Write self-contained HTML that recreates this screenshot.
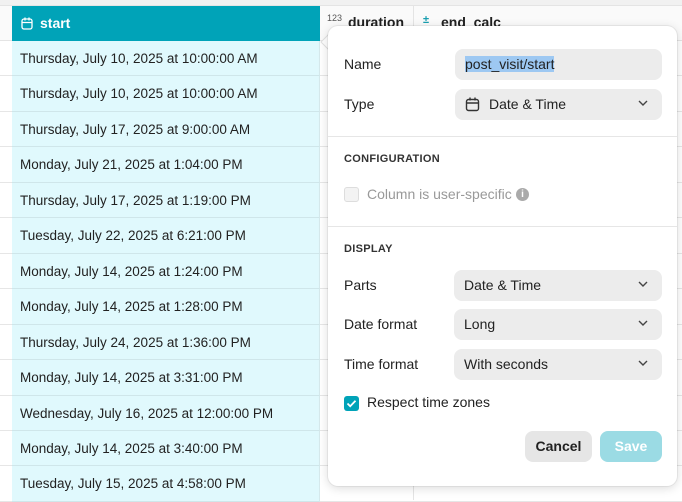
<!DOCTYPE html>
<html><head><style>
*{box-sizing:border-box;margin:0;padding:0}
body{width:682px;height:500px;overflow:hidden;background:#fff;font-family:"Liberation Sans",Arial,sans-serif;position:relative;color:#222}
.abs{position:absolute}
.top{left:0;top:0;width:682px;height:6px;background:#f1f1f1;border-bottom:1px solid #e4e4e4}
.hdr{top:6px;height:35px;background:#fafafa;border-bottom:1px solid #e4e4e4}
.row{left:0;width:682px;height:1px;background:#e6e6e6}
.cell{left:12px;width:308px;background:#e0f9fd;border-right:1px solid #d5e9ec;border-bottom:1px solid #cfe6ea;font-size:13.5px;color:#222;padding-left:8px;line-height:35px}
.pop{left:328px;top:26px;width:349px;height:460px;background:#fff;border-radius:10px;box-shadow:0 2px 10px rgba(0,0,0,.15),0 0 0 1px rgba(0,0,0,.05)}
.lbl{font-size:14px;color:#222}
.inp{left:127px;width:207px;height:31px;background:#ececec;border-radius:8px;font-size:14px;line-height:31px;padding-left:10px}
.chev{position:absolute;right:14px;top:11px}
.sec{font-size:11px;font-weight:bold;letter-spacing:.3px;color:#333}
.div{left:0;width:349px;height:1px;background:#e6e6e6}
</style></head><body>
<div class="abs top"></div>
<div class="abs hdr" style="left:0;width:12px"></div>
<div class="abs hdr" style="left:320px;width:362px"></div>
<div class="abs" style="left:413px;top:6px;width:1px;height:494px;background:#e4e4e4"></div>
<div class="abs" style="left:327px;top:13px;font-size:9px;color:#555">123</div>
<div class="abs" style="left:348px;top:14px;font-size:14px;font-weight:bold;color:#222">duration</div>
<div class="abs" style="left:423px;top:14px;font-size:11px;color:#1a9fb0;font-weight:bold">±</div>
<div class="abs" style="left:441px;top:14px;font-size:14px;font-weight:bold;color:#222">end_calc</div>
<div class="abs" style="left:12px;top:6px;width:308px;height:35px;background:#00a3b8;color:#fff;font-size:14px;font-weight:bold;line-height:34px;padding-left:28px">start
<svg style="position:absolute;left:9px;top:11px" width="12" height="13" viewBox="0 0 12 13"><rect x="1" y="2" width="10" height="10" rx="2" fill="none" stroke="#fff" stroke-width="1.3"/><path d="M1 5.5h10M4 0.5v3M8 0.5v3" stroke="#fff" stroke-width="1.3"/></svg></div>
<div id="rows"></div>
<script>
var d=["Thursday, July 10, 2025 at 10:00:00 AM","Thursday, July 10, 2025 at 10:00:00 AM","Thursday, July 17, 2025 at 9:00:00 AM","Monday, July 21, 2025 at 1:04:00 PM","Thursday, July 17, 2025 at 1:19:00 PM","Tuesday, July 22, 2025 at 6:21:00 PM","Monday, July 14, 2025 at 1:24:00 PM","Monday, July 14, 2025 at 1:28:00 PM","Thursday, July 24, 2025 at 1:36:00 PM","Monday, July 14, 2025 at 3:31:00 PM","Wednesday, July 16, 2025 at 12:00:00 PM","Monday, July 14, 2025 at 3:40:00 PM","Tuesday, July 15, 2025 at 4:58:00 PM"];
var h="";for(var i=0;i<d.length;i++){var t=Math.round(41+i*35.45);var n=Math.round(41+(i+1)*35.45);h+='<div class="abs row" style="top:'+(n-1)+'px"></div><div class="abs cell" style="top:'+t+'px;height:'+(n-t)+'px">'+d[i]+'</div>';}
document.getElementById("rows").innerHTML=h;
</script>
<svg class="abs" style="left:319px;top:34px" width="12" height="16"><path d="M10 0 L2 8 L10 16" fill="#fff" stroke="#e0e0e0"/></svg>
<div class="abs pop">
<div class="abs lbl" style="left:16px;top:30px">Name</div>
<div class="abs inp" style="top:23px"><span style="background:#9dc8f2">post_visit/start</span></div>
<div class="abs lbl" style="left:16px;top:70px">Type</div>
<div class="abs inp" style="top:63px;padding-left:34px">Date &amp; Time
<svg style="position:absolute;left:10px;top:8px" width="15" height="15" viewBox="0 0 15 15"><rect x="1.5" y="2.5" width="12" height="11" rx="2" fill="none" stroke="#333" stroke-width="1.4"/><path d="M1.5 6h12M5 0.5v3M10 0.5v3" stroke="#333" stroke-width="1.4"/></svg>
<svg class="chev" width="10" height="7"><path d="M1 1l4 4 4-4" fill="none" stroke="#444" stroke-width="1.4"/></svg></div>
<div class="abs div" style="top:110px"></div>
<div class="abs sec" style="left:16px;top:127px">CONFIGURATION</div>
<div class="abs" style="left:16px;top:161px;width:15px;height:15px;border:1px solid #ddd;background:#f3f3f3;border-radius:3px"></div>
<div class="abs" style="left:39px;top:160px;font-size:14px;color:#999">Column is user-specific</div>
<div class="abs" style="left:188px;top:162px;width:13px;height:13px;border-radius:50%;background:#aaa;color:#fff;font-size:10px;font-weight:bold;text-align:center;line-height:13px">i</div>
<div class="abs div" style="top:200px"></div>
<div class="abs sec" style="left:16px;top:217px">DISPLAY</div>
<div class="abs lbl" style="left:16px;top:251px">Parts</div>
<div class="abs inp" style="top:244px;left:126px;width:208px">Date &amp; Time<svg class="chev" width="10" height="7"><path d="M1 1l4 4 4-4" fill="none" stroke="#444" stroke-width="1.4"/></svg></div>
<div class="abs lbl" style="left:16px;top:290px">Date format</div>
<div class="abs inp" style="top:283px;left:126px;width:208px">Long<svg class="chev" width="10" height="7"><path d="M1 1l4 4 4-4" fill="none" stroke="#444" stroke-width="1.4"/></svg></div>
<div class="abs lbl" style="left:16px;top:330px">Time format</div>
<div class="abs inp" style="top:323px;left:126px;width:208px">With seconds<svg class="chev" width="10" height="7"><path d="M1 1l4 4 4-4" fill="none" stroke="#444" stroke-width="1.4"/></svg></div>
<div class="abs" style="left:16px;top:370px;width:15px;height:15px;background:#00a3b8;border-radius:3px"><svg width="15" height="15"><path d="M3.5 7.5l2.7 2.7 5.3-5.5" fill="none" stroke="#fff" stroke-width="1.8"/></svg></div>
<div class="abs" style="left:39px;top:368px;font-size:14px;color:#222">Respect time zones</div>
<div class="abs" style="left:197px;top:405px;width:67px;height:31px;background:#e6e6e6;border-radius:8px;font-size:14px;font-weight:bold;text-align:center;line-height:31px;color:#222">Cancel</div>
<div class="abs" style="left:272px;top:405px;width:62px;height:31px;background:#9bdbe4;border-radius:8px;font-size:14px;font-weight:bold;text-align:center;line-height:31px;color:#fff">Save</div>
</div>
</body></html>
